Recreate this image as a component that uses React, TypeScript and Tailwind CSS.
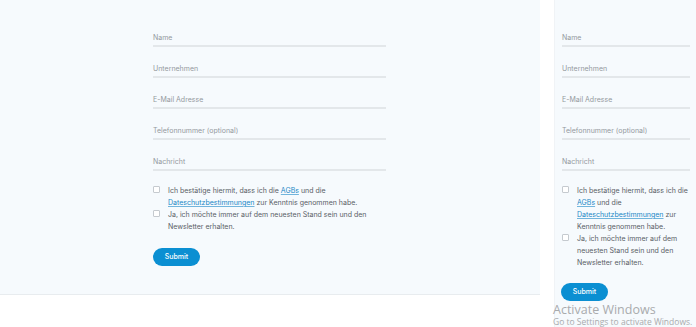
const fields = ["Name", "Unternehmen", "E-Mail Adresse", "Telefonnummer (optional)", "Nachricht"];

function Field({ label }: { label: string }) {
  return (
    <div className="border-b-2 border-[#e3e7ea] pb-[2px]">
      <p className="text-[7px] leading-[10px] text-[#94999e]">{label}</p>
    </div>
  );
}

function Check({ children }: { children: React.ReactNode }) {
  return (
    <label className="flex items-start">
      <span className="mt-[1px] h-[7px] w-[7px] shrink-0 rounded-[1px] border border-[#c5cacf] bg-white" />
      <span className="pl-[8px] text-[7px] leading-[12px] text-[#5a6066]">{children}</span>
    </label>
  );
}

function ContactForm({ compact = false }: { compact?: boolean }) {
  return (
    <div className="flex flex-col">
      <div className="flex flex-col gap-[17px]">
        {fields.map((f) => (
          <Field key={f} label={f} />
        ))}
      </div>
      <div className={compact ? "mt-[14px] pr-[2px]" : "mt-[14px]"}>
        <Check>
          Ich bestätige hiermit, dass ich die{" "}
          <a className="text-[#1b87c6] underline decoration-[#1b87c6]/60">AGBs</a> und die{" "}
          <a className="text-[#1b87c6] underline decoration-[#1b87c6]/60">Dateschutzbestimmungen</a> zur Kenntnis
          genommen habe.
        </Check>
        <Check>Ja, ich möchte immer auf dem neuesten Stand sein und den Newsletter erhalten.</Check>
      </div>
      <button
        className={
          (compact ? "mt-[14px] ml-[-1px]" : "mt-[15px]") +
          " h-[18px] w-[47px] rounded-full bg-[#0b8fd2] text-[7px] font-medium text-white"
        }
      >
        Submit
      </button>
    </div>
  );
}

export default function App() {
  return (
    <div
      className="relative flex h-[327px] w-[696px] overflow-hidden bg-white"
      style={{ fontFamily: "Inter, 'Noto Sans', sans-serif" }}
    >
      <div className="h-[295px] w-[540px] shrink-0 border-b border-[#e8ecef] bg-[#f6fafd] pl-[153px] pt-[33px]">
        <div className="w-[233px]">
          <ContactForm />
        </div>
      </div>
      <div className="ml-[14px] h-[327px] flex-1 border-l border-[#f0f3f6] bg-[#f6fafd] pl-[7px] pr-[6px] pt-[33px]">
        <ContactForm compact />
      </div>
      <div
        className="pointer-events-none absolute left-[553px] top-[303px] text-[#a9abad]"
        style={{ fontFamily: "'Open Sans', 'DejaVu Sans', sans-serif" }}
      >
        <p className="text-[12.5px] leading-[14px]">Activate Windows</p>
        <p className="text-[8.5px] leading-[10px]">Go to Settings to activate Windows.</p>
      </div>
    </div>
  );
}
